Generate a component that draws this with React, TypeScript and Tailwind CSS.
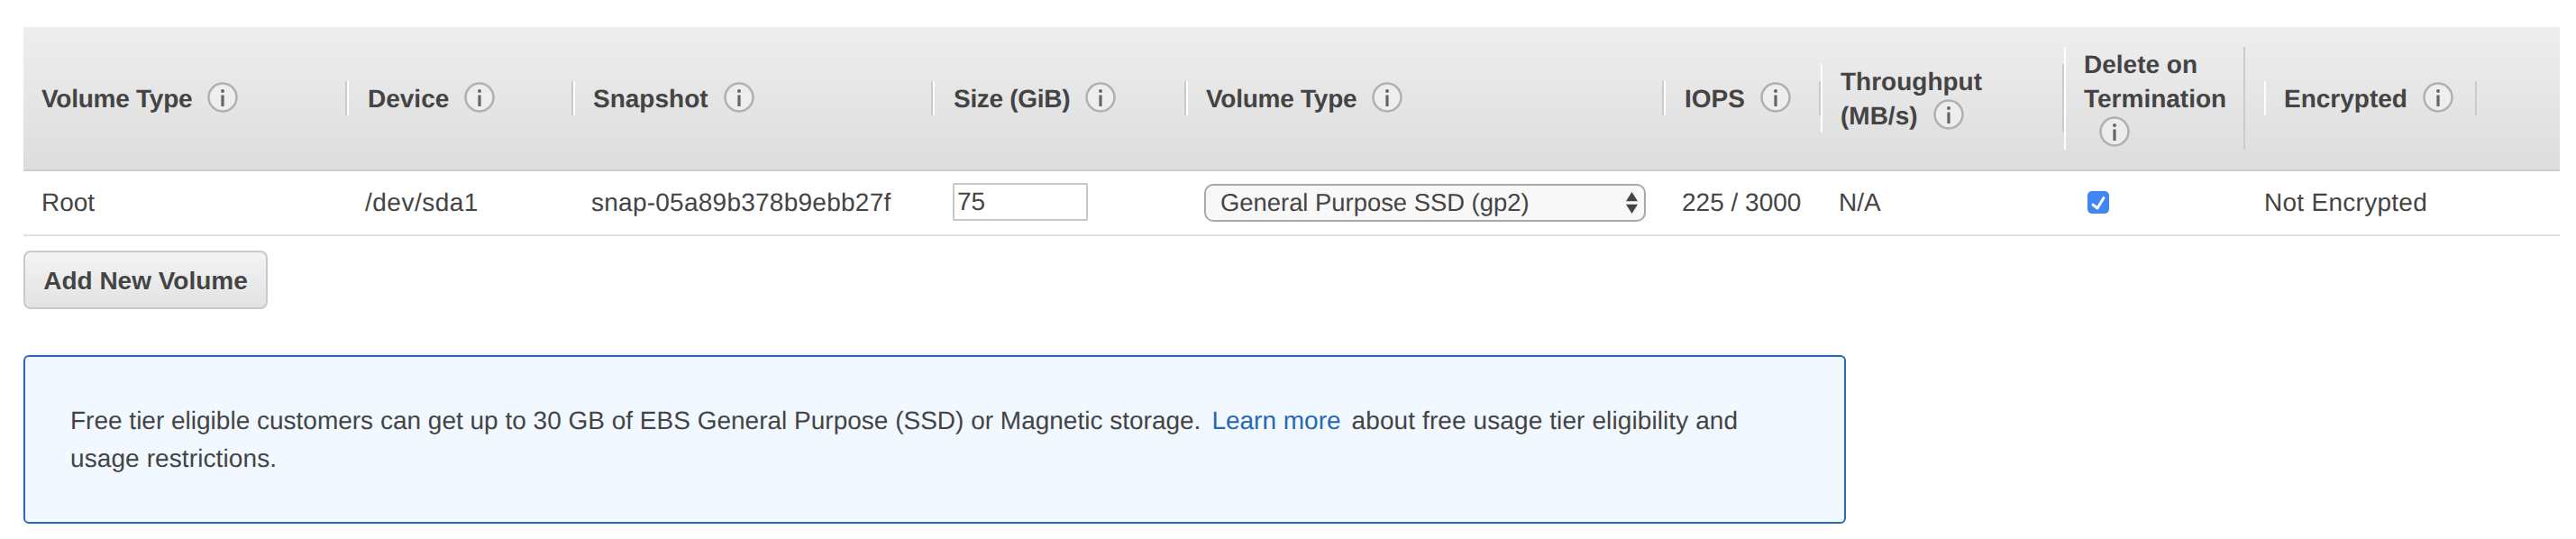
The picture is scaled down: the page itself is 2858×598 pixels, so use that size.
const InfoIcon = ({ className = 'ml-[17px]' }: { className?: string }) => (
  <svg viewBox="0 0 34 34" className={`inline-block w-[34px] h-[34px] align-[-6px] ${className}`}>
    <circle cx="17" cy="17" r="15.5" fill="#f3f3f3" fillOpacity="0.6" stroke="#b0b0b0" strokeWidth="2.5" />
    <circle cx="17" cy="10" r="2" fill="#666" />
    <rect x="15.4" y="14.5" width="3.2" height="12.5" fill="#666" />
  </svg>
);

const COLS = 'grid grid-cols-[359px_251px_399px_281px_530px_174px_270px_222px_328px]';
const TH = 'box-border pt-[1px] border-l-2 border-r-2 border-l-white border-r-[#cbcbcb]';

export default function App() {
  return (
    <div className="w-[2858px] h-[598px] bg-white pt-[30px] pl-[26px] pr-[18px] text-[#444] text-[28px] leading-[38px] font-['Liberation_Sans',Arial,sans-serif] [text-rendering:geometricPrecision] overflow-hidden">
      {/* Header */}
      <div className={`${COLS} h-[160px] items-center font-bold bg-gradient-to-b from-[#eeeeee] to-[#dddddd] border-b-2 border-[#cccccc]`}>
        <div className="box-border pt-[1px] h-[38px] pl-[20px] border-r-2 border-r-[#cbcbcb]"><span className="tracking-[-0.25px]">Volume Type</span><InfoIcon /></div>
        <div className={`${TH} h-[38px] pl-[21px]`}>Device<InfoIcon /></div>
        <div className={`${TH} h-[38px] pl-[20px]`}>Snapshot<InfoIcon /></div>
        <div className={`${TH} h-[38px] pl-[21px]`}><span className="tracking-[-0.3px]">Size (GiB)</span><InfoIcon /></div>
        <div className={`${TH} h-[38px] pl-[20px]`}><span className="tracking-[-0.25px]">Volume Type</span><InfoIcon /></div>
        <div className={`${TH} h-[38px] pl-[21px]`}>IOPS<InfoIcon /></div>
        <div className={`${TH} h-[76px] pl-[20px]`}>Throughput<br />(MB/s)<InfoIcon /></div>
        <div className={`${TH} h-[114px] w-[201px] pl-[20px]`}>Delete on<br />Termination<br /><InfoIcon /></div>
        <div className={`${TH} h-[38px] w-[236px] pl-[20px]`}>Encrypted<InfoIcon /></div>
      </div>

      {/* Row */}
      <div className={`${COLS} h-[72px] items-center border-b-2 border-[#e1e1e1]`}>
        <div className="pl-[20px]">Root</div>
        <div className="pl-[20px] tracking-[0.5px]">/dev/sda1</div>
        <div className="pl-[20px] tracking-[0.25px]">snap-05a89b378b9ebb27f</div>
        <div className="pl-[22px]">
          <div className="w-[150px] h-[42px] mb-[2px] border-2 border-[#c8c8c8] pl-[3px] leading-[38px]">75</div>
        </div>
        <div className="pl-[20px]">
          <div className="w-[490px] h-[42px] flex items-center justify-between pl-[16px] pr-[7px] rounded-[10px] border-2 border-[#a9a9a9] bg-[#f8f8f8]">
            <span className="text-[27.4px]">General Purpose SSD (gp2)</span>
            <svg viewBox="0 0 14 26" className="w-[13px] h-[26px]">
              <path d="M7 0 L14 11 L0 11 Z M0 15 L14 15 L7 26 Z" fill="#444" />
            </svg>
          </div>
        </div>
        <div className="pl-[20px]">225 / 3000</div>
        <div className="pl-[20px]">N/A</div>
        <div className="pl-[26px]">
          <div className="w-[24px] h-[25px] mb-[2px] rounded-[5px] bg-[#4285f4]">
            <svg viewBox="0 0 24 25" className="w-[24px] h-[25px]">
              <path d="M6 15 L11 19 L18 7.5" fill="none" stroke="#fff" strokeWidth="3" strokeLinecap="round" strokeLinejoin="round" />
            </svg>
          </div>
        </div>
        <div className="tracking-[0.28px]">Not Encrypted</div>
      </div>

      <button className="block box-border mt-[16px] w-[271px] h-[65px] pt-[3px] rounded-[8px] border-2 border-[#c9c9c9] bg-gradient-to-b from-[#f4f4f4] to-[#e2e2e2] font-bold text-center [text-shadow:0_1px_0_#fff]">
        Add New Volume
      </button>

      <div className="mt-[51px] w-[2022px] h-[187px] rounded-[6px] border-2 border-[#2a67b5] bg-[#f1f8ff] pl-[50px] pt-[50px] leading-[42px]">
        <span>Free tier eligible customers can get up to 30 GB of EBS General Purpose (SSD) or Magnetic storage.</span>
        <a className="text-[#2767b8] mx-[12px]">Learn more</a>
        <span className="tracking-[0.1px]">about free usage tier eligibility and</span>
        <br />
        <span className="tracking-[0.1px]">usage restrictions.</span>
      </div>
    </div>
  );
}
